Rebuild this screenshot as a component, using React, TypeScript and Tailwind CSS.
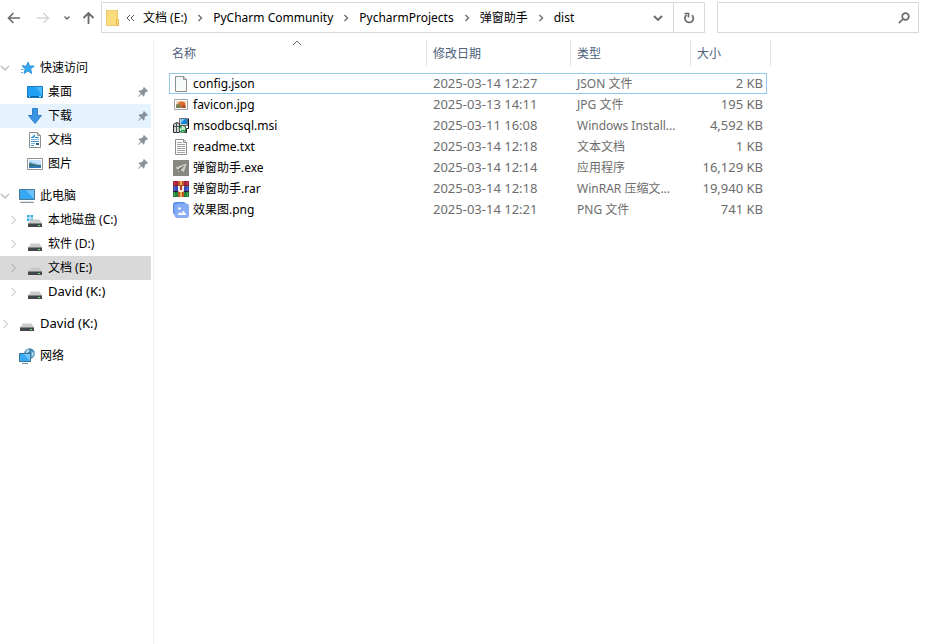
import type { ReactNode } from "react";
import clsx from "clsx";

const DriveIcon = ({ system = false }: { system?: boolean }) => (
  <svg width="16" height="16" viewBox="0 0 16 16">
    {system && <path d="M0 3h2.500v2.500H0zM3.500 3H6v2.500H3.500zM0 6.500h2.500V9H0zM3.500 6.500H6V9H3.500z" fill="#2cb1e0" />}
    <path d="M4 7.500h8.500l2.500 4H1z" fill="#c9cacc" />
    <path d="M1 11h14v4H1z" fill="#44474a" />
    <path d="M1 11h14v1H1z" fill="#85888b" />
    <path d="M11 13h2v1h-2z" fill="#5df06a" />
  </svg>
);

const StarIcon = () => (
  <svg width="16" height="16" viewBox="0 0 16 16">
    <path d="M9.200 2l1.300 3.900 4.800.2-3.600 2.700 1 4.700-3.900-2.400L5 13.600l1.200-4.700-2.900-2.600 4.100-.3z" fill="#33a9f0" stroke="#1e86cf" strokeWidth=".8" />
    <path d="M3 5.500h2M2 9.500h2.500M2 12.500h2" stroke="#5bb4ea" />
  </svg>
);

const DesktopIcon = () => (
  <svg width="16" height="16" viewBox="0 0 16 16">
    <path d="M.5 2.500h15v11H.5z" fill="#22a0f5" stroke="#1579bd" />
    <path d="M9 3h6v9z" fill="#4ab8ff" />
    <path d="M1 12h14v1H1z" fill="#0d64a5" />
    <path d="M2 12h1v1H2zM12 12h2v1h-2z" fill="#bfe6ff" />
  </svg>
);

const DownloadIcon = () => (
  <svg width="16" height="16" viewBox="0 0 16 16">
    <path d="M5.500.5h5v7h4L8 15.500 1.500 7.500h4z" fill="#3a94e4" stroke="#2f7fcb" strokeLinejoin="round" />
  </svg>
);

const DocumentIcon = () => (
  <svg width="16" height="16" viewBox="0 0 16 16">
    <path d="M2.500.5h8l3 3v12h-11z" fill="#fff" stroke="#8a8f94" />
    <path d="M10.500.5v3h3" fill="none" stroke="#8a8f94" />
    <path d="M4 5.500h3M8 5.500h4M4 9.500h8M4 13.500h3" stroke="#3c8fc4" />
    <path d="M4 7.500h8M4 11.500h4" stroke="#74b6db" />
    <path d="M9 11h3v2H9z" fill="#34607f" />
    <path d="M5 5l3-3v3z" fill="#2b9ddb" />
  </svg>
);

const PictureIcon = () => (
  <svg width="16" height="16" viewBox="0 0 16 16">
    <path d="M.5 2.500h15v11H.5z" fill="#fff" stroke="#8c9094" />
    <path d="M2 4h12v8H2z" fill="#8ec5ee" />
    <path d="M2 5.500c4 0 4 2 12 3V4H2z" fill="#c5e2f8" />
    <path d="M2 7c3 0 5 2 12 2v3H2z" fill="#3f6f79" />
    <path d="M2 10.500c4-1 8-.5 12 0V12H2z" fill="#2f79bd" />
  </svg>
);

const PcIcon = () => (
  <svg width="16" height="16" viewBox="0 0 16 16">
    <path d="M.5 1.500h15v10H.5z" fill="#37a8f3" stroke="#4e7794" />
    <path d="M7 2h8v9z" fill="#6cc4fb" />
    <path d="M1 14.500h14" stroke="#8796a3" />
    <path d="M2 13.500h12" stroke="#dde3e8" />
  </svg>
);

const NetworkIcon = () => (
  <svg width="16" height="16" viewBox="0 0 16 16">
    <circle cx="10.500" cy="5.500" r="5.300" fill="#3f86ad" />
    <path d="M7 2.500c1.500-2 3-1.500 3.500 0S8.500 5 7.500 5 6.500 3.500 7 2.500zM12.500 3l2.500 2c0 2-1 3.500-2.500 4.500z" fill="#a9d6ea" />
    <path d="M.5 5.500h11v8H.5z" fill="#36a9f4" stroke="#39708f" />
    <path d="M5 6h6v7z" fill="#71c9fc" />
    <path d="M3 15.500h6" stroke="#6895b1" />
  </svg>
);

const PinIcon = () => (
  <svg width="10" height="10" viewBox="0 0 10 10" className="mr-[3px] shrink-0">
    <path d="M6 0l4 4-1 .9-.9-.2-1.400 1.700-.2 2.300-1 .7-2-2.200L.6 10 0 9.400l2.800-2.900L.6 4.500l.7-1 2.400-.2 1.600-1.500-.2-.9z" fill="#87929c" />
  </svg>
);

const FolderIcon = () => (
  <svg width="14" height="16" viewBox="0 0 14 16" className="shrink-0">
    <path d="M.5.5h11v15H.5z" fill="#fbdc7e" stroke="#ecca67" />
    <path d="M10.500 9.500h2v6h-2z" fill="#fbe08d" stroke="#e2b94a" />
  </svg>
);

const Chevron = ({ open = false }: { open?: boolean }) => (
  <svg width="10" height="10" viewBox="0 0 10 10" fill="none" stroke="currentColor">
    <path d={open ? "M1 3l4 4 4-4" : "M3.500 1l4 4-4 4"} strokeWidth="1.400" />
  </svg>
);

const BlankFileIcon = ({ lines = false }: { lines?: boolean }) => (
  <svg width="16" height="16" viewBox="0 0 16 16">
    <path d="M2.500.5h8l3 3v12h-11z" fill={lines ? "#fff" : "#f8f9f9"} stroke="#8e8e8e" />
    <path d="M10.500.5v3h3" fill="none" stroke="#8e8e8e" />
    {lines && <path d="M4 3.500h5M4 5.500h8M4 7.500h8M4 9.500h8M4 11.500h8M4 13.500h8" stroke="#a6a6a6" />}
  </svg>
);

const JpgIcon = () => (
  <svg width="16" height="16" viewBox="0 0 16 16">
    <path d="M1.500 2.500h13v10h-13z" fill="#fff" stroke="#a0a0a0" />
    <path d="M3 4h10v7H3z" fill="#ead9b5" />
    <path d="M5 6c2-2 5-2 7 0l1 5H8z" fill="#dd6b2d" />
    <path d="M3 7.500l3-.5 3 4H3z" fill="#7c7f55" />
    <path d="M9.500 8H12v3H9.500z" fill="#a9472c" />
  </svg>
);

const MsiIcon = () => (
  <svg width="16" height="16" viewBox="0 0 16 16">
    <path d="M6.500.5h8v7h-8z" fill="#c9ced2" stroke="#6b7176" />
    <path d="M8 1h6v5H8z" fill="#1583d8" />
    <path d="M8 1h4L8 5z" fill="#64c3ff" />
    <path d="M15.500.5v10h-2v4h-2" fill="none" stroke="#15181b" />
    <path d="M.5 6.500l3-2 3 1v9h-6z" fill="#d7d9d6" stroke="#262a2b" />
    <path d="M3.500 5v10M1 8.500h5" stroke="#3e5054" />
    <circle cx="9.500" cy="11" r="3.500" fill="#d5f1d8" stroke="#214e2e" />
    <path d="M9.500 11L7 9M9.500 11l2.500 2.500M9.500 11l-1 3" stroke="#12a541" strokeWidth="1.500" />
    <circle cx="9.500" cy="11" r="1" fill="#fff" />
  </svg>
);

const ExeIcon = () => (
  <svg width="16" height="16" viewBox="0 0 16 16">
    <path d="M0 0h16v16H0z" fill="#888882" />
    <path d="M3 8l10-4-2.500 7.500-3-2-1.500 2V9z" fill="#c4c5c0" stroke="#ecece8" strokeWidth=".6" strokeLinejoin="round" />
    <path d="M6 9l6-4-4.500 4.500L6 11.500z" fill="#4a4b45" />
  </svg>
);

const RarIcon = () => (
  <svg width="16" height="16" viewBox="0 0 16 16">
    <path d="M0 0h16v5H0z" fill="#a8203a" />
    <path d="M0 5.500h16v5H0z" fill="#3446b4" />
    <path d="M0 11h16v5H0z" fill="#218339" />
    <path d="M0 4.500h16v1H0zM0 10h16v1H0z" fill="#2a1d3b" />
    <path d="M1 1h1v3H1zM14 1h1v3h-1z" fill="#d34b62" />
    <path d="M1 6.500h1v3H1zM14 6.500h1v3h-1z" fill="#6678dc" />
    <path d="M1 12h1v3H1zM14 12h1v3h-1z" fill="#55b566" />
    <path d="M5 0h6v16H5z" fill="#c2542a" />
    <path d="M7 0h2v6H7zM7 11h2v5H7z" fill="#e5b04c" />
    <path d="M5 5h6v5l-1 1H6l-1-1z" fill="#f1ebe4" />
    <path d="M7 4h2v5H7z" fill="#a34429" />
  </svg>
);

const PngIcon = () => (
  <svg width="16" height="16" viewBox="0 0 16 16">
    <rect width="13" height="13" rx="3" fill="#5b8def" />
    <rect x="1.500" y="1.500" width="14.500" height="14.500" rx="3" fill="#86acf5" />
    <circle cx="6.500" cy="6.500" r="1.300" fill="#fff" />
    <path d="M4.500 13l2.500-3 1.500 1.500L10.500 8.500l3 4.500z" fill="#fff" />
  </svg>
);

interface NavItem {
  label: string;
  icon: ReactNode;
  level: number;
  expand?: "open" | "closed";
  pinned?: boolean;
  state?: "hover" | "selected";
}

const navGroups: NavItem[][] = [
  [
    { label: "快速访问", icon: <StarIcon />, level: 0, expand: "open" },
    { label: "桌面", icon: <DesktopIcon />, level: 1, pinned: true },
    { label: "下载", icon: <DownloadIcon />, level: 1, pinned: true, state: "hover" },
    { label: "文档", icon: <DocumentIcon />, level: 1, pinned: true },
    { label: "图片", icon: <PictureIcon />, level: 1, pinned: true },
  ],
  [
    { label: "此电脑", icon: <PcIcon />, level: 0, expand: "open" },
    { label: "本地磁盘 (C:)", icon: <DriveIcon system />, level: 1, expand: "closed" },
    { label: "软件 (D:)", icon: <DriveIcon />, level: 1, expand: "closed" },
    { label: "文档 (E:)", icon: <DriveIcon />, level: 1, expand: "closed", state: "selected" },
    { label: "David (K:)", icon: <DriveIcon />, level: 1, expand: "closed" },
  ],
  [{ label: "David (K:)", icon: <DriveIcon />, level: 0, expand: "closed" }],
  [{ label: "网络", icon: <NetworkIcon />, level: 0 }],
];

const files = [
  { name: "config.json", date: "2025-03-14 12:27", type: "JSON 文件", size: "2 KB", icon: <BlankFileIcon /> },
  { name: "favicon.jpg", date: "2025-03-13 14:11", type: "JPG 文件", size: "195 KB", icon: <JpgIcon /> },
  { name: "msodbcsql.msi", date: "2025-03-11 16:08", type: "Windows Install...", size: "4,592 KB", icon: <MsiIcon /> },
  { name: "readme.txt", date: "2025-03-14 12:18", type: "文本文档", size: "1 KB", icon: <BlankFileIcon lines /> },
  { name: "弹窗助手.exe", date: "2025-03-14 12:14", type: "应用程序", size: "16,129 KB", icon: <ExeIcon /> },
  { name: "弹窗助手.rar", date: "2025-03-14 12:18", type: "WinRAR 压缩文...", size: "19,940 KB", icon: <RarIcon /> },
  { name: "效果图.png", date: "2025-03-14 12:21", type: "PNG 文件", size: "741 KB", icon: <PngIcon /> },
];

const crumbs = ["文档 (E:)", "PyCharm Community", "PycharmProjects", "弹窗助手", "dist"];

const Toolbar = () => (
  <header className="flex h-10 items-start pt-0.5 pr-[13px]">
    <div className="flex h-[31px] shrink-0 items-center text-[#6a6a6a]">
      <button aria-label="后退" className="flex w-7 justify-center">
        <svg width="14" height="12" viewBox="0 0 14 12" fill="none" stroke="currentColor" strokeWidth="1.600">
          <path d="M13 6H2M6.500 1L1.500 6l5 5" />
        </svg>
      </button>
      <button aria-label="前进" className="flex w-[30px] justify-center text-[#d4d4d4]">
        <svg width="14" height="12" viewBox="0 0 14 12" fill="none" stroke="currentColor" strokeWidth="1.400">
          <path d="M1 6h11M7.500 1l5 5-5 5" />
        </svg>
      </button>
      <button aria-label="最近浏览的位置" className="flex w-[18px] justify-center">
        <svg width="8" height="6" viewBox="0 0 8 6" fill="none" stroke="currentColor" strokeWidth="1.500">
          <path d="M1.500 1.500L4 4l2.500-2.500" />
        </svg>
      </button>
      <button aria-label="上移" className="flex w-[25px] justify-center">
        <svg width="14" height="14" viewBox="0 0 14 14" fill="none" stroke="currentColor" strokeWidth="1.800">
          <path d="M6.500 13V2M1.500 7l5-5 5 5" />
        </svg>
      </button>
    </div>

    <div className="flex h-[31px] min-w-0 flex-1 items-center border border-[#d9d9d9] pl-1">
      <FolderIcon />
      <nav className="flex min-w-0 flex-1 items-center pl-1.5">
        <button aria-label="更多" className="mr-2 text-[#555]">
          <svg width="9" height="8" viewBox="0 0 9 8" fill="none" stroke="currentColor">
            <path d="M4 1L1 4l3 3M8 1L5 4l3 3" />
          </svg>
        </button>
        {crumbs.map((crumb, i) => (
          <span key={crumb} className="flex items-center whitespace-nowrap">
            {i > 0 && (
              <svg width="6" height="8" viewBox="0 0 6 8" fill="none" stroke="#777" strokeWidth="1.500" className="mx-2.5">
                <path d="M1.500 1l3 3-3 3" />
              </svg>
            )}
            <a href="#" className="text-black">
              {crumb}
            </a>
          </span>
        ))}
      </nav>
      <button aria-label="历史记录" className="flex w-[30px] justify-center text-[#6a6a6a]">
        <svg width="10" height="8" viewBox="0 0 10 8" fill="none" stroke="currentColor" strokeWidth="1.800">
          <path d="M1 2l4 4 4-4" />
        </svg>
      </button>
      <button aria-label="刷新" className="flex h-full w-[31px] items-center justify-center border-l border-[#d9d9d9] text-[#6a6a6a]">
        <svg width="12" height="12" viewBox="0 0 12 12" fill="none" stroke="currentColor" strokeWidth="1.700">
          <path d="M9 3.200A4.200 4.200 0 1 1 3.500 3" />
          <path d="M1.500 1.500h4v4" />
        </svg>
      </button>
    </div>

    <label className="ml-3 flex h-[31px] w-[202px] shrink-0 items-center border border-[#d9d9d9]">
      <input aria-label="搜索" type="text" className="h-full min-w-0 flex-1 px-2 outline-none" />
      <svg width="12" height="12" viewBox="0 0 12 12" fill="none" stroke="#6a6a6a" strokeWidth="1.700" className="mr-2">
        <circle cx="7.500" cy="4.500" r="3.300" />
        <path d="M5 7L.8 11.200" />
      </svg>
    </label>
  </header>
);

const Sidebar = () => (
  <aside className="w-[154px] shrink-0 border-r border-[#f0f0f0] pt-4 pr-0.5">
    {navGroups.map((group, i) => (
      <ul key={i} className="mb-2">
        {group.map((item) => (
          <li
            key={item.label}
            className={clsx(
              "flex h-6 items-center",
              item.level > 0 && "pl-2",
              item.state === "hover" && "bg-[#e5f3ff]",
              item.state === "selected" && "bg-[#d9d9d9]"
            )}
          >
            <span
              className={clsx(
                "w-[19px] shrink-0",
                item.expand === "open" || item.state === "selected" ? "text-[#bcbcbc]" : "text-[#d8d8d8]"
              )}
            >
              {item.expand && <Chevron open={item.expand === "open"} />}
            </span>
            <a href="#" className="flex min-w-0 flex-1 items-center gap-[5px] whitespace-nowrap text-black">
              {item.icon}
              <span className={clsx(item.label.startsWith("David") && "text-[13px]")}>{item.label}</span>
            </a>
            {item.pinned && <PinIcon />}
          </li>
        ))}
      </ul>
    ))}
  </aside>
);

const headCell = "flex h-[26px] items-center border-r border-[#e5e5e5] pt-0.5";

const FileTable = () => (
  <table className="w-full table-fixed border-separate border-spacing-0 text-left text-[#6d6d6d]">
    <colgroup>
      <col className="w-[258px]" />
      <col className="w-[144px]" />
      <col className="w-[120px]" />
      <col className="w-[76px]" />
      <col />
    </colgroup>
    <thead className="text-[#4c607a]">
      <tr>
        <th className="relative p-0 pb-[7px] font-normal">
          <div className={clsx(headCell, "pl-[3px]")}>名称</div>
          <svg width="10" height="6" viewBox="0 0 10 6" fill="none" stroke="#666" className="absolute top-0 left-1/2 -ml-1.5">
            <path d="M1 5l4-4 4 4" />
          </svg>
        </th>
        <th className="p-0 pb-[7px] font-normal">
          <div className={clsx(headCell, "pl-1.5")}>修改日期</div>
        </th>
        <th className="p-0 pb-[7px] font-normal">
          <div className={clsx(headCell, "pl-1.5")}>类型</div>
        </th>
        <th className="p-0 pb-[7px] font-normal">
          <div className="flex h-[26px] items-center pt-0.5 pl-1.5">大小</div>
        </th>
        <td className="p-0 pb-[7px]">
          <div className={clsx(headCell, "w-1")} />
        </td>
      </tr>
    </thead>
    <tbody>
      {files.map((file, i) => {
        const border = i === 0 ? "border-[#90c8f0]" : "border-transparent";
        return (
          <tr key={file.name} className="h-[21px] whitespace-nowrap">
            <td className={clsx("border-y border-l py-0 pl-[3px]", border)}>
              <a href="#" className="flex h-[19px] items-center gap-1 text-black">
                {file.icon}
                {file.name}
              </a>
            </td>
            <td className={clsx("border-y py-0 pl-1.5 text-[13px] leading-[19px]", border)}>{file.date}</td>
            <td className={clsx("border-y py-0 pl-1.5 leading-[19px]", border)}>{file.type}</td>
            <td className={clsx("border-y border-r py-0 pr-[3px] text-right text-[13px] leading-[19px]", border)}>{file.size}</td>
          </tr>
        );
      })}
    </tbody>
  </table>
);

const App = () => {
  return (
    <div className="flex min-h-screen flex-col bg-white font-['Noto_Sans','Noto_Sans_CJK_SC',sans-serif] text-[12px] text-black">
      <Toolbar />
      <div className="flex flex-1">
        <Sidebar />
        <main className="min-w-0 flex-1 pl-[15px]">
          <FileTable />
        </main>
      </div>
    </div>
  );
};

export default App;
